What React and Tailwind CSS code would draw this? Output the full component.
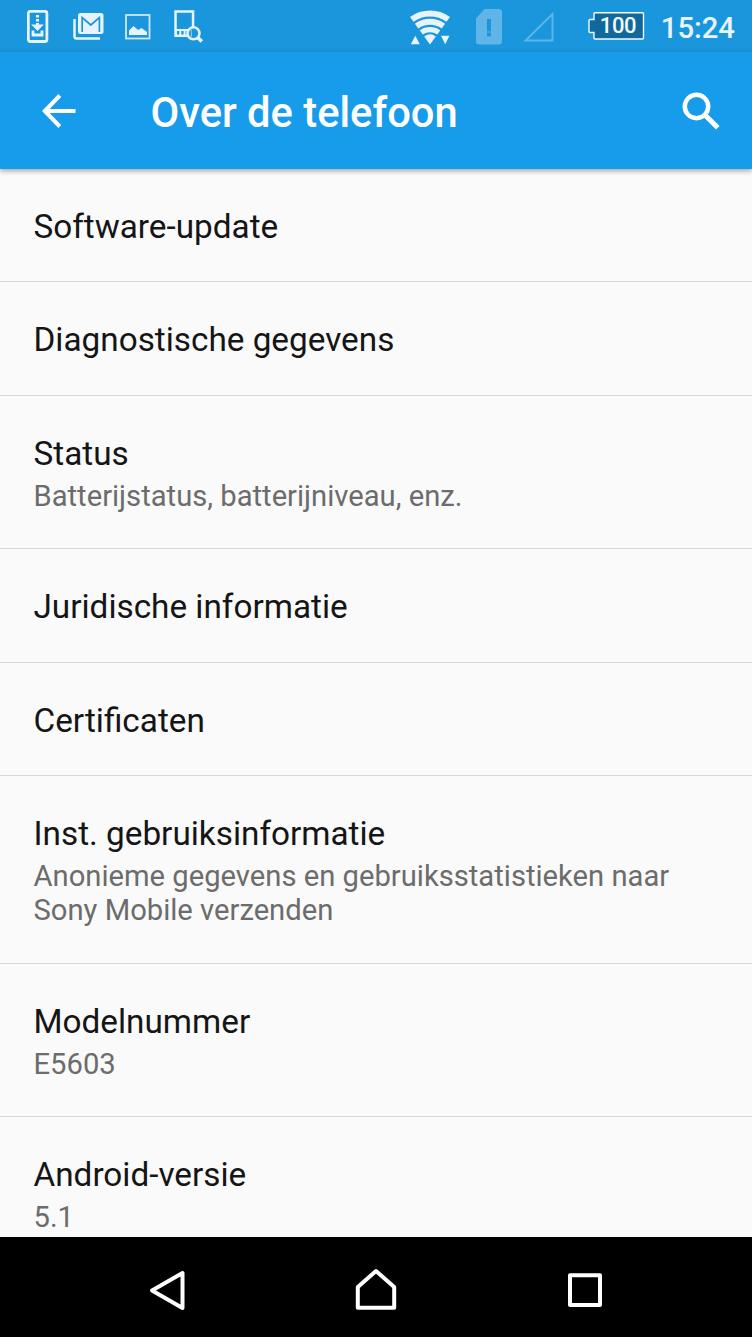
const rows = [
  { title: 'Software-update', height: 'h-[113px]' },
  { title: 'Diagnostische gegevens', height: 'h-[114px]' },
  { title: 'Status', summary: ['Batterijstatus, batterijniveau, enz.'], height: 'h-[153px]' },
  { title: 'Juridische informatie', height: 'h-[114px]' },
  { title: 'Certificaten', height: 'h-[113px]' },
  {
    title: 'Inst. gebruiksinformatie',
    summary: ['Anonieme gegevens en gebruiksstatistieken naar', 'Sony Mobile verzenden'],
    height: 'h-[188px]',
  },
  { title: 'Modelnummer', summary: ['E5603'], height: 'h-[153px]' },
  { title: 'Android-versie', summary: ['5.1'], height: 'h-[153px]' },
];

function UpdateIcon() {
  return (
    <svg width="22" height="34" viewBox="0 0 22 34" className="ml-[27px] mt-[2px]" fill="none">
      <rect x="1.3" y="1.3" width="18.6" height="30.2" rx="2" stroke="#e8f4fd" strokeWidth="2.8" />
      <path d="M9 5h3v2.5H9zM9 9h3v2.5H9z" fill="#e8f4fd" />
      <path d="M9 13h3v1.500h4.800l-6.300 6.500L4.200 14.500H9z" fill="#e8f4fd" />
      <path d="M6 20.500V25h9v-4.500" stroke="#e8f4fd" strokeWidth="2.8" />
    </svg>
  );
}

function MailIcon() {
  return (
    <svg width="32" height="30" viewBox="0 0 32 30" className="ml-[24px] mt-[3px]" fill="none">
      <path d="M1.500 6v17.500q0 2 2 2H27" stroke="#e8f4fd" strokeWidth="2.5" />
      <rect x="5" y="0" width="25.5" height="21" rx="2.5" fill="#e8f4fd" />
      <path d="M9.200 19V4.500l8.600 7.500 8.600-7.500V19" stroke="#1a96dc" strokeWidth="1.7" />
    </svg>
  );
}

function PictureIcon() {
  return (
    <svg width="26" height="26" viewBox="0 0 26 26" className="ml-[20px] mt-[2px]" fill="none">
      <rect x="1" y="1" width="23.5" height="23.5" stroke="#cfe8f9" strokeWidth="1.8" />
      <path d="M4 21v-4.500l4.500-4.500 4.500 4 3.500-2L22 18v3z" fill="#e8f4fd" />
    </svg>
  );
}

function PhoneSearchIcon() {
  return (
    <svg width="30" height="34" viewBox="0 0 30 34" className="ml-[23px] mt-[2px]" fill="none">
      {/* phone body with a row of three keys */}
      <path
        d="M0.300 0.300H20.300V27H0.300zM2.800 2.800V19H17.800V2.800zM3 21v3.500h2.300V21zM7.300 21v3.500h2.300V21zM11.600 21v3.500h2.300V21z"
        fill="#e8f4fd"
        fillRule="evenodd"
      />
      <circle cx="19.5" cy="23.3" r="6" fill="#1a96dc" stroke="#e8f4fd" strokeWidth="2.5" />
      <path d="M17.300 19.500v7.500" stroke="#8fcaf0" strokeWidth="1.2" />
      <path d="M24 27.800l3.800 3.800" stroke="#e8f4fd" strokeWidth="3.6" />
    </svg>
  );
}

function WifiIcon() {
  return (
    <svg width="42" height="36" viewBox="0 0 42 36" className="mt-[3px]" fill="none">
      {/* arcs share one centre at the bottom tip */}
      <g stroke="#e8f4fd">
        <path d="M1.800 9.400A31 31 0 0 1 38.200 9.400" strokeWidth="6" />
        <path d="M6.600 16.100A22.800 22.800 0 0 1 33.400 16.100" strokeWidth="6" />
        <path d="M11.300 22.500A14.800 14.800 0 0 1 28.700 22.500" strokeWidth="5.2" />
      </g>
      <path d="M14.200 26.500A9.800 9.800 0 0 1 25.800 26.500L20 34.500z" fill="#e8f4fd" />
      <path d="M0.800 34.200h9l-4.500-8.500zM31 25.700h8.500L35.200 34.200z" fill="#e8f4fd" />
    </svg>
  );
}

function SimIcon() {
  return (
    <svg width="26" height="36" viewBox="0 0 26 36" className="ml-[24px] mt-[2px]">
      <path
        d="M8.500 0H23q3 0 3 3v29.500q0 3-3 3H3q-3 0-3-3V9.500zM11 10v12.500h4V10zM11 23.500v4h4v-4z"
        fill="#60b5e8"
        fillRule="evenodd"
      />
    </svg>
  );
}

function SignalIcon() {
  return (
    <svg width="32" height="32" viewBox="0 0 32 32" className="ml-[21px] mt-[2px]" fill="none">
      <path d="M2.500 29.500H29.500V3z" stroke="#60b5e8" strokeWidth="1.9" />
    </svg>
  );
}

function Battery() {
  return (
    <div className="relative ml-[33px] h-[28px] w-[57px]">
      <svg width="57" height="28" viewBox="0 0 57 28" fill="none">
        <path
          d="M7 0.700H54.500q1 0 1 1V26q0 1-1 1H7q-1 0-1-1V20.500H2q-1 0-1-1V8.500q0-1 1-1H6V1.700q0-1 1-1z"
          fill="#11699b"
          stroke="#f3faff"
          strokeWidth="1.4"
        />
      </svg>
      <span className="absolute left-[12px] top-0 text-[22px] leading-[28px] font-medium tracking-[-0.4px] text-[#f3faff]">100</span>
    </div>
  );
}

function StatusBar() {
  return (
    <div className="flex h-[52px] shrink-0 items-center bg-[#1a96dc]">
      <UpdateIcon />
      <MailIcon />
      <PictureIcon />
      <PhoneSearchIcon />
      <div className="ml-auto flex items-center pr-[17px]">
        <WifiIcon />
        <SimIcon />
        <SignalIcon />
        <Battery />
        <span className="ml-[16px] mt-[3px] text-[29.25px] leading-[34px] font-medium text-[#e8f4fd]">15:24</span>
      </div>
    </div>
  );
}

function AppBar() {
  return (
    <header className="relative z-10 flex h-[117px] shrink-0 items-center bg-[#169ceb] pl-[42px] pr-[32px] text-white shadow-[0_2px_5px_rgba(0,0,0,0.35)]">
      <svg width="34" height="34" viewBox="0 0 34 34" fill="none" stroke="currentColor" strokeWidth="4" className="mt-[1px]">
        <path d="M17.800 1.500L2.800 17l15 15.500M3 17h30.500" />
      </svg>
      <h1 className="ml-[74.5px] mt-[4px] text-[41.7px] leading-[48px] font-medium whitespace-nowrap">Over de telefoon</h1>
      <svg width="38" height="38" viewBox="0 0 38 38" fill="none" stroke="currentColor" strokeWidth="4.5" className="ml-auto">
        <circle cx="14.5" cy="14.5" r="11.7" />
        <path d="M23 23l12.800 12.800" strokeWidth="5" />
      </svg>
    </header>
  );
}

function Row({ title, summary, height }) {
  return (
    <li className={`${height} shrink-0 border-b border-[#d8d8d8] px-[33.5px] pt-[38px]`}>
      <div className="text-[33.3px] leading-[39px] text-[#151515]">{title}</div>
      {summary && (
        <div className="mt-[6px] text-[29.2px] leading-[34px] text-[#6c6c6c]">
          {summary.map((line) => (
            <div key={line} className="whitespace-nowrap">{line}</div>
          ))}
        </div>
      )}
    </li>
  );
}

function NavBar() {
  return (
    <nav className="flex h-[100px] shrink-0 items-center bg-black pl-[148px] pt-[6px]">
      <svg width="40" height="44" viewBox="0 0 40 44" fill="none" stroke="#fff" strokeWidth="4" strokeLinejoin="round">
        <path d="M4 22.500L34.500 5v35z" />
      </svg>
      <svg width="44" height="44" viewBox="0 0 44 44" fill="none" stroke="#fff" strokeWidth="4" strokeLinejoin="round" className="ml-[166px]">
        <path d="M3.800 39.800V19L22 3l18.200 16v20.800z" />
      </svg>
      <svg width="36" height="36" viewBox="0 0 36 36" fill="none" stroke="#fff" strokeWidth="4" strokeLinejoin="round" className="ml-[169px]">
        <path d="M3 3.200h30v29.800H3z" />
      </svg>
    </nav>
  );
}

export default function App() {
  return (
    <div className="flex h-[1337px] w-[752px] flex-col overflow-hidden bg-[#fafafa] font-['Roboto',sans-serif]">
      <StatusBar />
      <AppBar />
      <ul className="flex min-h-0 flex-1 flex-col overflow-hidden">
        {rows.map((row) => (
          <Row key={row.title} {...row} />
        ))}
      </ul>
      <NavBar />
    </div>
  );
}
